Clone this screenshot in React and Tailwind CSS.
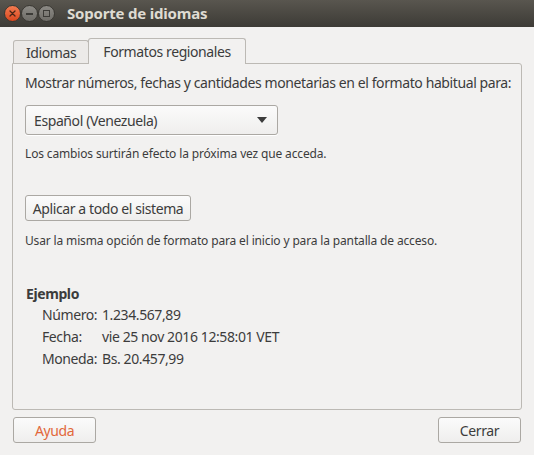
import React from "react"

const font = { fontFamily: '"Noto Sans", "Open Sans", sans-serif' }

function WinButton({ kind }) {
    if (kind === "close") {
        return (
            <div className="w-[17px] h-[17px] rounded-full bg-gradient-to-b from-[#f37b50] to-[#d9461c] border border-[#3a3833] flex items-center justify-center">
                <svg width="7" height="7" viewBox="0 0 7 7">
                    <path d="M1 1L6 6M6 1L1 6" stroke="#4a2516" strokeWidth="1.3" strokeLinecap="round" />
                </svg>
            </div>
        )
    }
    return (
        <div className="w-[17px] h-[17px] rounded-full bg-gradient-to-b from-[#8c8a85] to-[#6f6d68] border border-[#3a3833] flex items-center justify-center">
            {kind === "min" ? (
                <div className="w-[7px] h-[2px] bg-[#3c3b37]" />
            ) : (
                <div className="w-[7px] h-[7px] border border-[#3c3b37]" />
            )}
        </div>
    )
}

const App = () => {
    return (
        <div className="w-[534px] h-[455px] bg-[#f2f1f0] flex flex-col overflow-hidden text-[#3c3c3c] tracking-[-0.4px]" style={font}>
            {/* Title bar */}
            <div className="h-[27px] bg-gradient-to-b from-[#59564f] to-[#3d3b36] flex items-center pl-[4px] shrink-0">
                <div className="flex items-center">
                    <WinButton kind="close" />
                    <WinButton kind="min" />
                    <WinButton kind="max" />
                </div>
                <div className="ml-[12px] text-[15px] font-bold text-[#dfdbd2] leading-none tracking-[-0.2px]">Soporte de idiomas</div>
            </div>

            {/* Notebook */}
            <div className="px-[12px] pt-[10px]">
                <div className="flex items-end h-[26px]">
                    <div className="h-[23px] pl-[12px] pr-[12px] border border-b-0 border-[#bcb9b4] rounded-t-[3px] bg-[#eceae8] flex items-center text-[14px] ml-[1px]">
                        Idiomas
                    </div>
                    <div className="h-[26px] px-[14px] border border-b-0 border-[#bcb9b4] rounded-t-[3px] bg-[#f2f1f0] flex items-center text-[14px] -ml-px relative top-[1px]">
                        Formatos regionales
                    </div>
                </div>
                <div className="h-[347px] border border-[#bcb9b4] rounded-b-[3px] rounded-tr-[3px] px-[12px] pt-[8px]">
                    <div className="text-[14px] leading-[22px] whitespace-nowrap">
                        Mostrar números, fechas y cantidades monetarias en el formato habitual para:
                    </div>
                    <div className="mt-[11px] w-[253px] h-[30px] border border-[#aba8a3] rounded-[3px] bg-gradient-to-b from-[#fbfbfb] to-[#efeeed] flex items-center justify-between pl-[8px] pr-[10px] shadow-[0_1px_0_#ffffff]">
                        <span className="text-[14px]">Español (Venezuela)</span>
                        <svg width="10" height="6" viewBox="0 0 10 6">
                            <path d="M0 0H10L5 6Z" fill="#3c3c3c" />
                        </svg>
                    </div>
                    <div className="mt-[10px] text-[12px] leading-[18px] tracking-[-0.15px]">
                        Los cambios surtirán efecto la próxima vez que acceda.
                    </div>
                    <div className="mt-[32px] w-[166px] h-[26px] border border-[#aba8a3] rounded-[3px] bg-gradient-to-b from-[#fbfbfb] to-[#efeeed] flex items-center justify-center text-[14px]">
                        Aplicar a todo el sistema
                    </div>
                    <div className="mt-[11px] text-[12px] leading-[18px] tracking-[-0.15px]">
                        Usar la misma opción de formato para el inicio y para la pantalla de acceso.
                    </div>
                    <div className="mt-[34px] text-[14px] font-bold leading-[20px] pl-[1px]">Ejemplo</div>
                    <div className="mt-0 pl-[17px] grid grid-cols-[60px_1fr] text-[14px] leading-[22px]">
                        <span>Número:</span>
                        <span>1.234.567,89</span>
                        <span>Fecha:</span>
                        <span>vie 25 nov 2016 12:58:01 VET</span>
                        <span>Moneda:</span>
                        <span>Bs. 20.457,99</span>
                    </div>
                </div>
            </div>

            {/* Bottom buttons */}
            <div className="flex justify-between px-[13px] mt-[7px]">
                <div className="w-[83px] h-[26px] border border-[#aba8a3] rounded-[3px] bg-gradient-to-b from-[#fbfbfb] to-[#efeeed] flex items-center justify-center text-[14px] text-[#e2683b]">
                    Ayuda
                </div>
                <div className="w-[83px] h-[26px] border border-[#aba8a3] rounded-[3px] bg-gradient-to-b from-[#fbfbfb] to-[#efeeed] flex items-center justify-center text-[14px]">
                    Cerrar
                </div>
            </div>
        </div>
    )
}

export default App
